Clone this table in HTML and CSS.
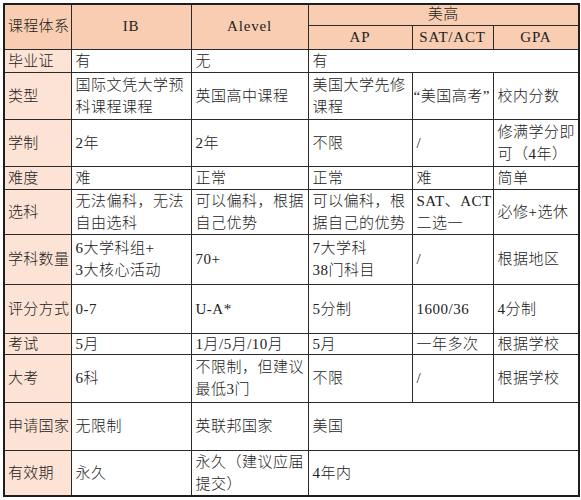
FILE: index.html
```html
<!DOCTYPE html>
<html lang="zh">
<head>
<meta charset="utf-8">
<title>课程体系对比</title>
<link rel="stylesheet" href="styles.css">
</head>
<body>
<div class="wrap">
<table class="cmp">
  <colgroup>
    <col class="c0"><col class="c1"><col class="c2"><col class="c3"><col class="c4"><col class="c5">
  </colgroup>
  <tr class="h1">
    <th rowspan="2" class="lead">课程体系</th>
    <th rowspan="2" class="lat">IB</th>
    <th rowspan="2" class="lat">Alevel</th>
    <th colspan="3">美高</th>
  </tr>
  <tr class="h2">
    <th class="lat">AP</th>
    <th class="lat">SAT/ACT</th>
    <th class="lat">GPA</th>
  </tr>
  <tr class="r23">
    <td class="k">毕业证</td><td>有</td><td>无</td><td colspan="3">有</td>
  </tr>
  <tr class="r47">
    <td class="k">类型</td><td>国际文凭大学预<br>科课程课程</td><td>英国高中课程</td><td>美国大学先修<br>课程</td><td class="nw">“美国高考”</td><td>校内分数</td>
  </tr>
  <tr class="r47">
    <td class="k">学制</td><td>2年</td><td>2年</td><td>不限</td><td>/</td><td>修满学分即<br>可（4年）</td>
  </tr>
  <tr class="r24">
    <td class="k">难度</td><td>难</td><td>正常</td><td>正常</td><td>难</td><td>简单</td>
  </tr>
  <tr class="r46">
    <td class="k">选科</td><td>无法偏科，无法<br>自由选科</td><td>可以偏科，根据<br>自己优势</td><td>可以偏科，根<br>据自己的优势</td><td>SAT、ACT<br>二选一</td><td>必修+选休</td>
  </tr>
  <tr class="r50">
    <td class="k">学科数量</td><td>6大学科组+<br>3大核心活动</td><td>70+</td><td>7大学科<br>38门科目</td><td>/</td><td>根据地区</td>
  </tr>
  <tr class="r49">
    <td class="k">评分方式</td><td>0-7</td><td>U-A*</td><td>5分制</td><td>1600/36</td><td>4分制</td>
  </tr>
  <tr class="r21">
    <td class="k">考试</td><td>5月</td><td>1月/5月/10月</td><td>5月</td><td>一年多次</td><td>根据学校</td>
  </tr>
  <tr class="r48">
    <td class="k">大考</td><td>6科</td><td>不限制，但建议<br>最低3门</td><td>不限</td><td>/</td><td>根据学校</td>
  </tr>
  <tr class="r48">
    <td class="k">申请国家</td><td>无限制</td><td>英联邦国家</td><td colspan="3">美国</td>
  </tr>
  <tr class="r44">
    <td class="k">有效期</td><td>永久</td><td>永久（建议应届<br>提交）</td><td colspan="3">4年内</td>
  </tr>
</table>
</div>
</body>
</html>
```

FILE: styles.css
```css
html, body {
  margin: 0;
  padding: 0;
  background: #ffffff;
}
.wrap {
  padding: 3px 0 0 3px;
}
.cmp {
  border-collapse: collapse;
  table-layout: fixed;
  width: 575px;
  border: 2px solid #1e1e1e;
  font-family: "Liberation Serif", "Noto Sans CJK SC Light", "Noto Sans CJK SC", serif;
  font-size: 15px;
  letter-spacing: 0.5px;
  color: #222222;
}
.c0 { width: 67px; }
.c1 { width: 120px; }
.c2 { width: 117px; }
.c3 { width: 104px; }
.c4 { width: 81px; }
.c5 { width: 86px; }
.cmp th, .cmp td {
  border: 1px solid #2a2a2a;
  padding: 0 0 0 4px;
  vertical-align: middle;
  line-height: 22px;
  font-weight: 400;
  overflow: hidden;
}
.cmp th {
  background: #f8cdb1;
  text-align: center;
  padding: 0;
}
.cmp th.lead {
  text-align: left;
  padding-left: 3px;
  letter-spacing: 0.3px;
}
.cmp th.lat {
  letter-spacing: 0.8px;
}
.cmp td {
  text-align: left;
}
.cmp td.k {
  background: #fce3d5;
  padding-left: 3px;
  letter-spacing: 0.3px;
  white-space: nowrap;
}
.cmp td.nw {
  white-space: nowrap;
  padding-left: 1px;
}
.h1 { height: 21px; }
.h2 { height: 24px; }
.h1 th, .h2 th { line-height: 19px; }
.r21 { height: 21px; }
.r21 td { line-height: 18px; }
.r23 { height: 23px; }
.r24 { height: 23px; }
.r44 { height: 44px; }
.r46 { height: 45px; }
.r47 { height: 47px; }
.r48 { height: 48px; }
.r49 { height: 49px; }
.r50 { height: 50px; }
```
